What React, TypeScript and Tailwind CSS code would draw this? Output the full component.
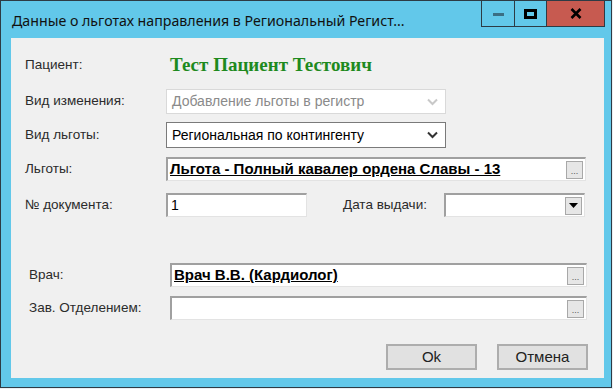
import React from "react";

const sans = { fontFamily: '"Liberation Sans", Arial, sans-serif' };

const Label: React.FC<{ text: string; className?: string }> = ({ text, className }) => (
  <div className={"shrink-0 text-[13.5px] text-[#2b2b2b] " + (className ?? "w-[141px]")}>{text}</div>
);

const Chevron = ({ color }: { color: string }) => (
  <svg width="11" height="8" viewBox="0 0 11 8">
    <path d="M1 1.5 L5.5 6 L10 1.5" fill="none" stroke={color} strokeWidth="2" />
  </svg>
);

const DotsButton = () => (
  <div className="flex h-[18px] w-[17px] shrink-0 items-end justify-center border border-[#a8a8a8] bg-[#e6e6e6] pb-[2px] text-[9px] leading-none text-[#555]">
    ...
  </div>
);

const SunkenField: React.FC<{ children?: React.ReactNode; className?: string }> = ({ children, className }) => (
  <div
    className={
      "flex h-[24px] items-center border-t-2 border-l-2 border-b border-r border-t-[#a0a0a0] border-l-[#a0a0a0] border-b-[#e3e3e3] border-r-[#e3e3e3] bg-white " +
      (className ?? "")
    }
  >
    {children}
  </div>
);

export default function App() {
  return (
    <div className="h-[389px] w-[613px] overflow-hidden bg-[#e9eef2]" style={sans}>
      <div className="flex h-[388px] w-[612px] flex-col border border-[#2d3b45] bg-[#62c8ea]">
        {/* title bar */}
        <div className="flex h-[37px] shrink-0">
          <div
            className="flex-1 pl-[11px] pt-[10px] text-[14.2px] leading-[20px] text-[#111]"
            style={{ fontFamily: '"Noto Sans", "Open Sans", sans-serif' }}
          >
            Данные о льготах направления в Региональный Регист...
          </div>
          <div className="mr-[6px] flex h-[26px] border border-t-0 border-[#2d3b45]">
            <div className="flex w-[33px] items-center justify-center border-r border-[#2d3b45]">
              <div className="mt-[2px] h-[3px] w-[11px] bg-[#3b6e84]" />
            </div>
            <div className="flex w-[32px] items-center justify-center border-r border-[#2d3b45]">
              <div className="h-[10px] w-[13px] border-[3px] border-black" />
            </div>
            <div className="flex w-[57px] items-center justify-center bg-[#c75a50]">
              <svg width="12" height="11" viewBox="0 0 12 11">
                <path d="M1.5 1 L10.5 10 M10.5 1 L1.5 10" stroke="#000" strokeWidth="2.6" />
              </svg>
            </div>
          </div>
        </div>

        {/* client area */}
        <div className="ml-[10px] mr-[7px] flex h-[340px] flex-col bg-[#f0f0f0] pl-[14px]">
          <div className="mt-[17px] flex h-[20px] items-center">
            <Label text="Пациент:" />
            <div
              className="ml-[4px] text-[19px] font-bold text-[#1e8a1e]"
              style={{ fontFamily: '"Liberation Serif", "Times New Roman", serif' }}
            >
              Тест Пациент Тестович
            </div>
          </div>

          <div className="mt-[14px] flex items-center">
            <Label text="Вид изменения:" />
            <div className="flex h-[25px] w-[280px] items-center justify-between border border-[#d9d9d9] bg-white pl-[5px] pr-[7px] text-[14px] text-[#8a8a8a]">
              <span>Добавление льготы в регистр</span>
              <Chevron color="#c8c8c8" />
            </div>
          </div>

          <div className="mt-[8px] flex items-center">
            <Label text="Вид льготы:" />
            <div className="flex h-[26px] w-[280px] items-center justify-between border border-[#7a7a7a] bg-white pl-[5px] pr-[7px] text-[14px] text-black">
              <span>Региональная по контингенту</span>
              <Chevron color="#333" />
            </div>
          </div>

          <div className="mt-[9px] flex items-center">
            <Label text="Льготы:" />
            <SunkenField className="w-[420px] justify-between pl-[2px] pr-[2px]">
              <span className="text-[15px] font-bold text-black underline">Льгота - Полный кавалер ордена Славы - 13</span>
              <DotsButton />
            </SunkenField>
          </div>

          <div className="mt-[12px] flex items-center">
            <Label text="№ документа:" />
            <SunkenField className="w-[141px] pl-[3px] text-[14px] text-black">1</SunkenField>
            <div className="ml-[36px] w-[101px] text-[13.5px] text-[#2b2b2b]">Дата выдачи:</div>
            <SunkenField className="w-[141px] justify-end pr-[2px]">
              <div className="flex h-[18px] w-[17px] items-center justify-center border border-[#a8a8a8] bg-[#e6e6e6]">
                <svg width="9" height="5" viewBox="0 0 9 5">
                  <path d="M0 0 H9 L4.5 5 Z" fill="#000" />
                </svg>
              </div>
            </SunkenField>
          </div>

          <div className="mt-[46px] flex items-center pl-[4px]">
            <Label text="Врач:" />
            <SunkenField className="w-[417px] justify-between pl-[2px] pr-[2px]">
              <span className="text-[15px] font-bold text-black underline">Врач В.В. (Кардиолог)</span>
              <DotsButton />
            </SunkenField>
          </div>

          <div className="mt-[9px] flex items-center pl-[4px]">
            <Label text="Зав. Отделением:" />
            <SunkenField className="w-[417px] justify-end pr-[2px]">
              <DotsButton />
            </SunkenField>
          </div>

          <div className="mt-[24px] flex justify-end gap-[20px] pr-[16px]">
            <button className="h-[26px] w-[91px] border-2 border-[#adadad] bg-[#e1e1e1] text-[15px] text-[#222]">Ok</button>
            <button className="h-[26px] w-[91px] border-2 border-[#adadad] bg-[#e1e1e1] text-[15px] text-[#222]">Отмена</button>
          </div>
        </div>
      </div>
    </div>
  );
}
